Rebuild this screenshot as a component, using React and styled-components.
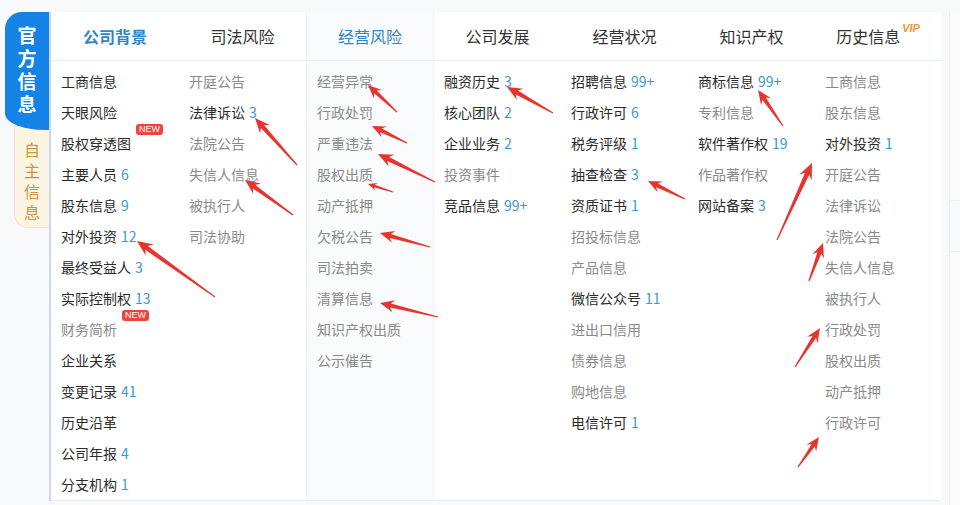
import React from 'react';
import styled, { createGlobalStyle } from 'styled-components';

const GlobalStyle = createGlobalStyle`
  body {
    margin: 0;
    background: #f8f9fa;
    font-family: "Noto Sans CJK SC", "Noto Sans", sans-serif;
  }
`;

const Page = styled.div`
  position: relative;
  width: 960px;
  height: 505px;
  display: flex;
  overflow: hidden;
`;

const Tabs = styled.div`
  width: 49px;
  padding-top: 12px;
  display: flex;
  flex-direction: column;
  align-items: flex-end;
`;

const MainTab = styled.div`
  position: relative;
  z-index: 2;
  width: 44px;
  height: 118px;
  box-sizing: border-box;
  padding-top: 11px;
  background: #1583e6;
  border-radius: 17px 0 0 40px / 17px 0 0 16px;
  color: #fff;
  font-size: 19px;
  font-weight: 700;
  line-height: 23px;
  display: flex;
  flex-direction: column;
  align-items: center;
`;

const SubTab = styled.div`
  width: 35px;
  height: 104px;
  margin-top: -6px;
  box-sizing: border-box;
  padding-top: 14px;
  background: #fdf5e4;
  border: 1px solid #f1e3c4;
  border-right: none;
  border-radius: 0 0 0 14px;
  color: #c8963f;
  font-size: 16px;
  line-height: 21px;
  display: flex;
  flex-direction: column;
  align-items: center;
`;

const Panel = styled.div`
  margin-top: 12px;
  height: 489px;
  display: flex;
  gap: 1px;
  border-left: 2px solid #c9d9e7;
  background: #f1f3f5;
`;

const Group = styled.div`
  display: flex;
  background: ${p => (p.$shaded ? '#fafbfc' : '#fff')};
  border-bottom: 1px solid #eceef1;
`;

const Column = styled.div`
  width: ${p => p.$w}px;
  display: flex;
  flex-direction: column;
`;

const Head = styled.div`
  height: 48px;
  border-bottom: 1px solid #eef0f2;
  display: flex;
  align-items: center;
  justify-content: center;
  font-size: 16px;
  color: ${p => (p.$active ? '#2f86c8' : '#333')};
  font-weight: ${p => (p.$bold ? 700 : 400)};
`;

const Vip = styled.span`
  align-self: flex-start;
  margin-top: 10px;
  margin-left: 2px;
  font-family: "Liberation Sans", sans-serif;
  font-size: 11px;
  font-weight: 700;
  font-style: italic;
  color: #f0962e;
`;

const List = styled.ul`
  list-style: none;
  margin: 0;
  padding: 5px 0 0 10px;
`;

const Item = styled.li`
  height: 31px;
  line-height: 31px;
  font-size: 14px;
  color: ${p => (p.$on ? '#2b2b2b' : '#8a8a8a')};
  white-space: nowrap;
`;

const Label = styled.span`
  position: relative;
`;

const Count = styled.span`
  margin-left: 4px;
  color: #3d98cf;
`;

const Badge = styled.span`
  position: absolute;
  left: calc(100% + 5px);
  top: -9px;
  padding: 0 3px;
  height: 11px;
  line-height: 11px;
  border-radius: 3px;
  background: #e8463e;
  color: #fff;
  font-family: "Liberation Sans", sans-serif;
  font-size: 9px;
`;

const Stub = styled.div`
  flex: 1;
  margin: 12px 0 0 8px;
  background: #fcfcfd;
  border-left: 1px solid #eceef0;
  display: flex;
  flex-direction: column;
  padding-top: 188px;
`;

const StubBox = styled.div`
  height: 50px;
  border-top: 1px solid #eef0f2;
  border-bottom: 1px solid #eef0f2;
  background: #f9fafb;
`;

const Overlay = styled.svg`
  position: absolute;
  left: 0;
  top: 0;
  pointer-events: none;
`;

const on = (t, n, badge) => ({ t, n, on: true, badge });
const off = (t, badge) => ({ t, on: false, badge });

const groups = [
  {
    cols: [
      {
        title: '公司背景', active: true, bold: true, w: 128,
        items: [
          on('工商信息'), on('天眼风险'), on('股权穿透图', null, 'NEW'), on('主要人员', '6'),
          on('股东信息', '9'), on('对外投资', '12'), on('最终受益人', '3'), on('实际控制权', '13'),
          off('财务简析', 'NEW'), on('企业关系'), on('变更记录', '41'), on('历史沿革'),
          on('公司年报', '4'), on('分支机构', '1'),
        ],
      },
      {
        title: '司法风险', w: 127,
        items: [
          off('开庭公告'), on('法律诉讼', '3'), off('法院公告'), off('失信人信息'), off('被执行人'), off('司法协助'),
        ],
      },
    ],
  },
  {
    shaded: true,
    cols: [
      {
        title: '经营风险', active: true, w: 126,
        items: [
          off('经营异常'), off('行政处罚'), off('严重违法'), off('股权出质'), off('动产抵押'),
          off('欠税公告'), off('司法拍卖'), off('清算信息'), off('知识产权出质'), off('公示催告'),
        ],
      },
    ],
  },
  {
    cols: [
      {
        title: '公司发展', w: 127,
        items: [on('融资历史', '3'), on('核心团队', '2'), on('企业业务', '2'), off('投资事件'), on('竞品信息', '99+')],
      },
      {
        title: '经营状况', w: 127,
        items: [
          on('招聘信息', '99+'), on('行政许可', '6'), on('税务评级', '1'), on('抽查检查', '3'),
          on('资质证书', '1'), off('招投标信息'), off('产品信息'), on('微信公众号', '11'),
          off('进出口信用'), off('债券信息'), off('购地信息'), on('电信许可', '1'),
        ],
      },
      {
        title: '知识产权', w: 127,
        items: [on('商标信息', '99+'), off('专利信息'), on('软件著作权', '19'), off('作品著作权'), on('网站备案', '3')],
      },
      {
        title: '历史信息', vip: true, w: 126,
        items: [
          off('工商信息'), off('股东信息'), on('对外投资', '1'), off('开庭公告'), off('法律诉讼'),
          off('法院公告'), off('失信人信息'), off('被执行人'), off('行政处罚'), off('股权出质'),
          off('动产抵押'), off('行政许可'),
        ],
      },
    ],
  },
];

// [tail, head, scale]
const arrows = [
  [[297, 165], [255, 118], 1],
  [[293, 215], [245, 180], 1],
  [[215, 297], [137, 241], 1.05],
  [[397, 112], [368, 85], 0.9],
  [[407, 143], [372, 126], 0.9],
  [[435, 182], [378, 154], 1],
  [[393, 192], [368, 184], 0.6],
  [[430, 247], [380, 233], 0.95],
  [[438, 317], [380, 303], 0.95],
  [[553, 113], [507, 87], 1],
  [[685, 199], [648, 181], 0.9],
  [[783, 126], [758, 90], 0.95],
  [[777, 240], [812, 163], 1.05],
  [[809, 281], [823, 243], 0.95],
  [[795, 367], [820, 328], 0.95],
  [[798, 467], [819, 437], 0.9],
];

function arrowPoints([x1, y1], [x2, y2], s) {
  const dx = x2 - x1;
  const dy = y2 - y1;
  const len = Math.hypot(dx, dy);
  const ux = dx / len;
  const uy = dy / len;
  const nx = -uy;
  const ny = ux;
  const head = 15 * s;
  const wing = 6.5 * s;
  const neck = 2.2 * s;
  const tail = 0.6;
  const kx = x2 - ux * head * 0.75;
  const ky = y2 - uy * head * 0.75;
  const wx = x2 - ux * head;
  const wy = y2 - uy * head;
  const pts = [
    [x1 + nx * tail, y1 + ny * tail],
    [kx + nx * neck, ky + ny * neck],
    [wx + nx * wing, wy + ny * wing],
    [x2, y2],
    [wx - nx * wing, wy - ny * wing],
    [kx - nx * neck, ky - ny * neck],
    [x1 - nx * tail, y1 - ny * tail],
  ];
  return pts.map(p => p.map(v => v.toFixed(1)).join(',')).join(' ');
}

const stack = text => [...text].map((c, i) => <span key={i}>{c}</span>);

const App = () => (
  <Page>
    <GlobalStyle />
    <Tabs>
      <MainTab>{stack('官方信息')}</MainTab>
      <SubTab>{stack('自主信息')}</SubTab>
    </Tabs>
    <Panel>
      {groups.map((g, gi) => (
        <Group key={gi} $shaded={g.shaded}>
          {g.cols.map(col => (
            <Column key={col.title} $w={col.w}>
              <Head $active={col.active} $bold={col.bold}>
                {col.title}
                {col.vip && <Vip>VIP</Vip>}
              </Head>
              <List>
                {col.items.map((it, i) => (
                  <Item key={i} $on={it.on}>
                    <Label>
                      {it.t}
                      {it.badge && <Badge>{it.badge}</Badge>}
                    </Label>
                    {it.n && <Count>{it.n}</Count>}
                  </Item>
                ))}
              </List>
            </Column>
          ))}
        </Group>
      ))}
    </Panel>
    <Stub>
      <StubBox />
    </Stub>
    <Overlay width="960" height="505" viewBox="0 0 960 505">
      {arrows.map(([a, b, s], i) => (
        <polygon key={i} points={arrowPoints(a, b, s)} fill="#e8342e" />
      ))}
    </Overlay>
  </Page>
);

export default App;
